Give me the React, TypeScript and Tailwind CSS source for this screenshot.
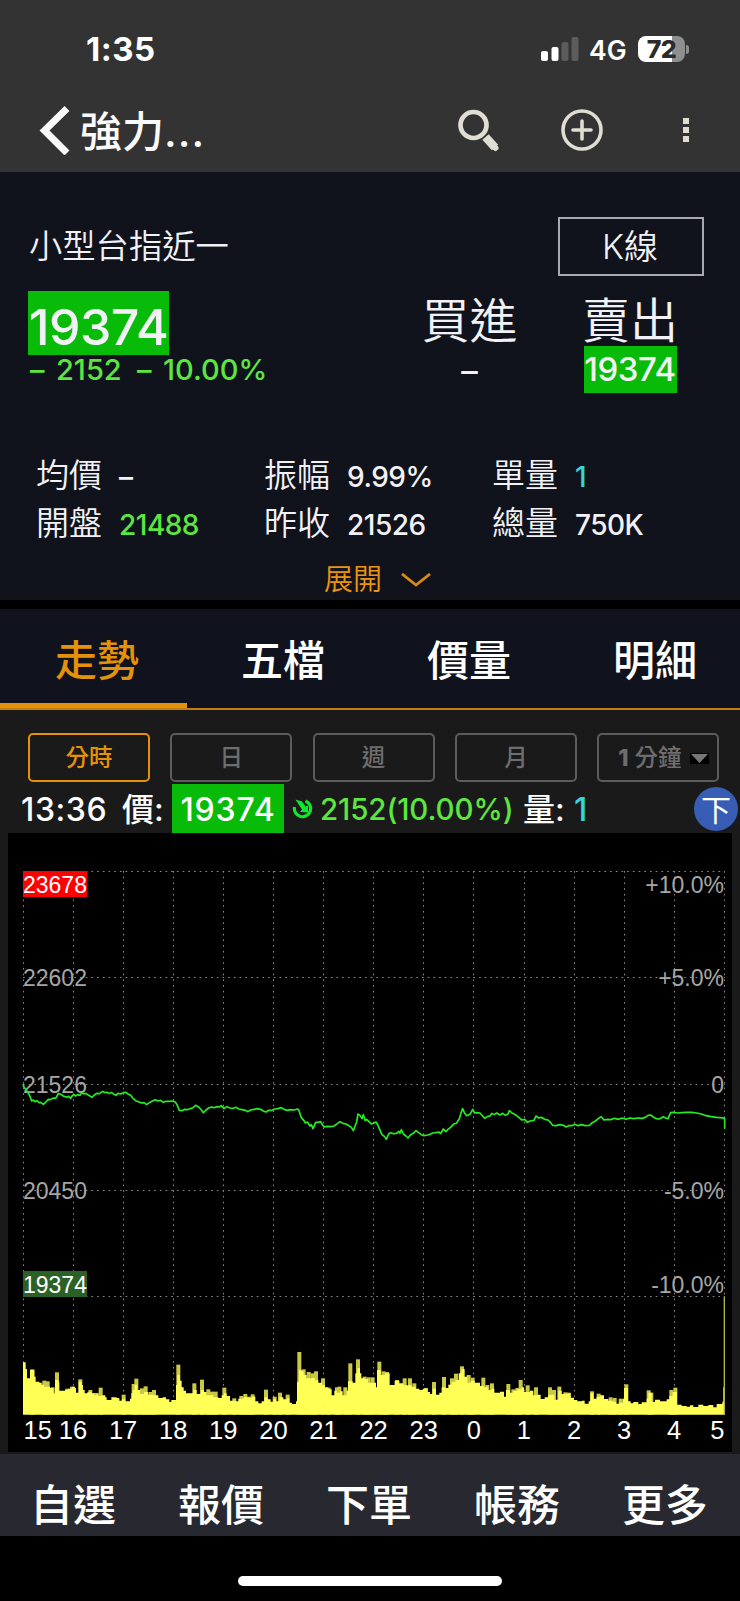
const stats = [
  { label: "均價", value: "–", color: "text-[#f2f2f6]" },
  { label: "振幅", value: "9.99%", color: "text-[#f2f2f6]" },
  { label: "單量", value: "1", color: "text-[#35d6d9]" },
  { label: "開盤", value: "21488", color: "text-[#5ce63f]" },
  { label: "昨收", value: "21526", color: "text-[#f2f2f6]" },
  { label: "總量", value: "750K", color: "text-[#f2f2f6]" },
];

const tabs = ["走勢", "五檔", "價量", "明細"];
const periods = ["分時", "日", "週", "月"];
const navItems = ["自選", "報價", "下單", "帳務", "更多"];

const priceLabels = [
  { y: 60, left: "23678", right: "+10.0%", limit: true },
  { y: 153, left: "22602", right: "+5.0%", limit: false },
  { y: 260, left: "21526", right: "0", limit: false },
  { y: 366, left: "20450", right: "-5.0%", limit: false },
  { y: 460, left: "19374", right: "-10.0%", limit: true },
];

const hours = ["16", "17", "18", "19", "20", "21", "22", "23", "0", "1", "2", "3", "4"];

// Chart series are stored in thirds of a pixel
const pricePoints =
  "69,732 72,742 80,752 88,764 95,783 100,780 105,785 110,782 117,788 122,787 130,793 138,786 145,778 152,779 160,774 167,775 175,761 183,763 190,768 200,772 206,769 212,775 218,766 222,764 226,768 233,764 240,766 246,758 252,762 258,760 266,766 276,772 283,765 290,760 298,761 308,754 314,758 322,757 328,761 334,757 342,763 348,766 354,760 362,762 370,758 378,757 384,762 392,766 400,776 408,783 416,785 424,789 432,788 440,794 448,788 456,784 466,779 474,783 482,781 490,787 498,784 508,784 518,783 526,786 532,796 538,811 546,812 554,808 562,809 570,806 578,804 587,796 596,801 604,810 610,818 618,810 626,804 634,801 642,803 650,800 658,801 664,797 672,806 680,800 690,804 700,805 708,802 716,807 726,809 736,811 744,815 752,810 762,808 772,806 782,808 790,813 798,816 806,811 816,811 824,807 834,806 844,803 852,808 862,811 872,809 882,810 892,807 896,809 904,833 912,842 916,849 922,846 930,858 934,854 939,866 947,847 955,847 962,845 968,856 973,861 982,859 992,860 1002,858 1012,851 1020,845 1028,850 1038,852 1048,858 1054,862 1060,872 1066,856 1070,846 1074,822 1080,826 1086,836 1090,824 1096,842 1100,838 1106,844 1114,852 1120,850 1128,846 1134,856 1138,866 1146,884 1154,890 1159,898 1166,882 1172,878 1180,881 1190,880 1196,874 1200,880 1204,869 1210,882 1218,888 1224,894 1232,884 1240,880 1248,872 1256,878 1264,884 1272,887 1282,885 1290,883 1298,879 1308,878 1316,876 1322,881 1330,867 1338,875 1344,868 1352,862 1360,853 1370,849 1378,836 1384,816 1388,806 1394,820 1400,827 1410,823 1416,812 1418,808 1424,819 1432,818 1440,819 1448,828 1454,835 1462,830 1470,828 1476,820 1482,824 1490,819 1500,825 1508,820 1516,826 1524,822 1528,812 1536,819 1546,824 1556,832 1566,840 1574,838 1582,847 1590,843 1602,841 1608,828 1616,834 1624,832 1634,838 1644,840 1652,848 1658,856 1668,857 1680,854 1690,856 1698,861 1706,857 1716,857 1724,853 1734,857 1744,854 1756,857 1768,856 1776,849 1786,843 1796,835 1804,830 1812,840 1822,838 1832,839 1844,835 1856,838 1866,834 1878,838 1890,834 1902,836 1914,834 1926,835 1936,832 1944,826 1952,825 1960,831 1968,836 1978,837 1990,830 1996,834 2004,836 2012,818 2022,817 2034,819 2046,818 2060,817 2075,817 2090,819 2104,822 2118,827 2134,830 2150,832 2162,833 2174,835 2174,866";

// [x, top] steps of the filled volume area
const volume = [
  [69, 607], [77, 627], [81, 655], [90, 630], [103, 650], [107, 665], [118, 668], [125, 674], [132, 680], [150, 684], [160, 700], [165, 660], [175, 665], [178, 692], [195, 690], [205, 686], [215, 680], [225, 684], [228, 698], [236, 665], [245, 675], [249, 690], [254, 700], [262, 697], [275, 700], [283, 706], [290, 700], [296, 708], [305, 706], [316, 712], [320, 720], [334, 712], [350, 714], [358, 722], [366, 718], [376, 724], [390, 716], [394, 700], [398, 690], [404, 674], [412, 690], [420, 702], [432, 696], [445, 704], [458, 706], [468, 706], [475, 714], [488, 712], [498, 718], [508, 726], [514, 720], [528, 675], [532, 645], [539, 662], [545, 682], [551, 692], [558, 700], [570, 700], [580, 690], [590, 702], [603, 690], [612, 696], [620, 706], [640, 712], [655, 714], [665, 706], [672, 700], [680, 708], [690, 722], [706, 724], [715, 716], [730, 712], [745, 714], [755, 710], [766, 724], [775, 730], [785, 724], [793, 712], [803, 718], [812, 725], [820, 718], [828, 724], [838, 712], [850, 718], [862, 714], [868, 728], [876, 732], [888, 724], [891, 665], [897, 630], [905, 634], [911, 645], [920, 655], [935, 654], [945, 660], [955, 668], [966, 676], [975, 682], [985, 688], [995, 706], [1003, 692], [1010, 698], [1020, 694], [1028, 706], [1040, 692], [1044, 664], [1058, 668], [1066, 640], [1072, 625], [1080, 640], [1084, 655], [1095, 657], [1104, 668], [1128, 682], [1131, 630], [1143, 645], [1155, 640], [1169, 675], [1184, 662], [1198, 670], [1210, 676], [1235, 680], [1247, 686], [1258, 690], [1268, 686], [1282, 696], [1290, 702], [1298, 686], [1308, 704], [1318, 698], [1325, 682], [1335, 684], [1345, 674], [1355, 666], [1366, 660], [1376, 640], [1384, 628], [1394, 650], [1402, 668], [1412, 662], [1424, 668], [1440, 678], [1452, 682], [1464, 690], [1475, 686], [1483, 698], [1500, 695], [1512, 710], [1518, 690], [1530, 698], [1540, 692], [1552, 688], [1565, 682], [1572, 696], [1590, 692], [1600, 706], [1612, 704], [1622, 717], [1634, 712], [1645, 705], [1655, 704], [1663, 719], [1675, 692], [1685, 702], [1706, 700], [1712, 713], [1722, 720], [1732, 724], [1746, 722], [1754, 731], [1766, 724], [1772, 700], [1780, 716], [1790, 710], [1800, 706], [1812, 717], [1825, 722], [1840, 726], [1848, 731], [1858, 728], [1868, 716], [1872, 684], [1884, 724], [1892, 730], [1900, 726], [1915, 732], [1925, 727], [1940, 716], [1945, 698], [1955, 726], [1965, 719], [1980, 724], [2000, 718], [2008, 708], [2018, 696], [2031, 734], [2045, 738], [2060, 740], [2070, 736], [2080, 741], [2095, 734], [2110, 738], [2125, 735], [2140, 742], [2150, 732], [2160, 732], [2167, 725], [2170, 682], [2175, 764],
];

// Short-lived peaks that rise over the area
const spikes = [
  [91, 628], [127, 662], [137, 664], [152, 682], [165, 637], [196, 686], [210, 680], [235, 658], [265, 690], [280, 699], [296, 683], [365, 704], [395, 672], [403, 656], [420, 685], [431, 679], [446, 696], [456, 690], [529, 614], [577, 670], [600, 659], [619, 688], [630, 695], [641, 695], [667, 683], [697, 715], [718, 708], [730, 702], [742, 710], [752, 703], [792, 689], [818, 710], [834, 698], [857, 704], [892, 576], [905, 628], [920, 636], [931, 640], [942, 634], [963, 655], [980, 683], [1005, 682], [1012, 680], [1030, 682], [1045, 610], [1068, 598], [1088, 650], [1100, 652], [1112, 652], [1132, 605], [1145, 634], [1155, 636], [1185, 660], [1208, 655], [1224, 655], [1237, 670], [1272, 684], [1296, 666], [1326, 651], [1350, 655], [1362, 641], [1380, 619], [1400, 645], [1412, 653], [1444, 653], [1456, 675], [1470, 670], [1519, 672], [1534, 688], [1556, 660], [1546, 684], [1577, 676], [1602, 682], [1644, 682], [1656, 690], [1672, 680], [1690, 697], [1700, 698], [1770, 694], [1790, 701], [1826, 712], [1838, 714], [1856, 716], [1873, 673], [1940, 691], [1948, 698], [2008, 690], [2020, 683],
];

const volumePath =
  "M69 764" + volume.map(([x, y]) => `H${x}V${y}`).join("") + "Z";

function StatusBar() {
  return (
    <div className="flex h-[87px] items-center pt-[11px] pl-[86px] text-white">
      <span className="w-[455px] pt-px text-[33px] leading-none font-bold tracking-[0.500px]">1:35</span>
      <svg className="h-6 w-[38px]" viewBox="0 0 38 24">
        <rect x="0" y="14" width="7" height="10" rx="2" fill="#fff" />
        <rect x="10.5" y="10" width="7" height="14" rx="2" fill="#fff" />
        <rect x="20.5" y="5" width="7" height="19" rx="2" fill="#5c5c5c" />
        <rect x="30.5" y="0" width="7" height="24" rx="2" fill="#5c5c5c" />
      </svg>
      <span className="ml-[10px] w-[49px] pt-[2px] text-[26.500px] leading-none font-semibold">4G</span>
      <div className="flex h-[26px] w-[47px] items-center justify-center rounded-[8px] bg-linear-to-r from-white from-72% to-[#8f8f8f] to-72% text-[25px] leading-none font-extrabold tracking-[-0.500px] text-[#2b2b2b]">
        72
      </div>
      <div className="ml-[1px] h-[9px] w-[3px] rounded-r-full bg-[#8f8f8f]" />
    </div>
  );
}

function Header() {
  return (
    <header className="h-[172px] bg-[#333333]">
      <StatusBar />
      <div className="flex h-[85px] items-center">
        <svg className="ml-[38px] h-[50px] w-[34px]" viewBox="0 0 34 50" fill="none" stroke="#fafafa" strokeWidth="7">
          <path d="M29 3.500L6.500 25.500L29 48" />
        </svg>
        <h1 className="ml-[8px] w-[377px] pt-[5px] text-[42px] leading-none font-medium whitespace-nowrap text-[#fafafa]">
          強力<span className="tracking-[1px]">...</span>
        </h1>
        <svg className="h-[44px] w-[44px]" viewBox="0 0 44 44" fill="none" stroke="#e0ddd2">
          <circle cx="16.500" cy="17" r="13" strokeWidth="4.700" />
          <path d="M28.500 29L38 39.500" strokeWidth="8.500" />
          <path d="M34 35.500L38.500 40" strokeWidth="6" strokeLinecap="round" />
        </svg>
        <svg className="ml-[60px] h-[42px] w-[42px]" viewBox="0 0 42 42" fill="none" stroke="#e0ddd2" strokeWidth="3.600">
          <circle cx="21" cy="21" r="19" />
          <path d="M21 12V30M12 21H30" strokeLinecap="round" />
        </svg>
        <div className="ml-[80px] flex flex-col gap-[3px]">
          <i className="size-[6px] bg-[#e0ddd2]" />
          <i className="size-[6px] bg-[#e0ddd2]" />
          <i className="size-[6px] bg-[#e0ddd2]" />
        </div>
      </div>
    </header>
  );
}

function QuotePanel() {
  return (
    <section className="h-[428px] bg-[#11131c] pt-[45px] text-[#f2f2f6]">
      <div className="flex h-[59px] items-center justify-between pr-[36px] pl-[29px]">
        <h2 className="pt-px text-[33.300px] leading-none font-[350]">小型台指近一</h2>
        <button className="h-[59px] w-[146px] border-2 border-[#a9aab0] pr-[2px] text-[34px] leading-none font-[350]">
          K線
        </button>
      </div>

      <div className="mt-[15px] flex pr-[30px] pl-[28px]">
        <div className="flex-1">
          <div className="flex h-[64px] w-[141px] items-center justify-center bg-[#08bb08] pt-[8px] text-[50px] leading-none font-medium tracking-[-0.500px]">
            19374
          </div>
          <p className="flex h-[29px] items-center pl-[2px] text-[29px] leading-none font-medium whitespace-nowrap text-[#5ce63f]">
            <span className="w-[26px]">–</span>
            <span className="w-[81px]">2152</span>
            <span className="w-[26px]">–</span>
            <span>10.00%</span>
          </p>
        </div>
        <div className="flex w-[161px] flex-col items-center">
          <div className="flex h-[55px] items-center pt-[5px] text-[48px] leading-none font-[350]">買進</div>
          <div className="flex h-[47px] items-center pt-[3px] text-[33px] leading-none font-medium">–</div>
        </div>
        <div className="flex w-[160px] flex-col items-center">
          <div className="flex h-[55px] items-center pt-[5px] text-[48px] leading-none font-[350]">賣出</div>
          <div className="flex h-[47px] w-[93px] items-center justify-center bg-[#08bb08] text-[33px] leading-none font-medium tracking-[-0.500px]">
            19374
          </div>
        </div>
      </div>

      <div className="mt-[58px] grid grid-cols-[228px_228px_228px] pl-[36px]">
        {stats.map((s) => (
          <div key={s.label} className="flex h-[48px] items-center">
            <span className="w-[83px] pt-px text-[33px] leading-none font-[350]">{s.label}</span>
            <span className={`pt-[4px] text-[28px] leading-none font-medium tracking-[-0.500px] ${s.color}`}>{s.value}</span>
          </div>
        ))}
      </div>

      <button className="flex w-full items-center gap-[19px] pt-[18px] pl-[324px] text-[29px] leading-none font-[350] text-[#ec940c]">
        展開
        <svg className="h-[14px] w-[30px]" viewBox="0 0 30 14" fill="none" stroke="#d98c14" strokeWidth="2.800">
          <path d="M1 1L15 12L29 1" />
        </svg>
      </button>
    </section>
  );
}

function Tabs() {
  return (
    <nav className="mt-[9px] flex h-[101px] overflow-hidden border-b-2 border-[#c27f10] bg-[#10131d]">
      {tabs.map((tab, i) => (
        <button
          key={tab}
          className={
            i === 0
              ? "h-[99px] w-[187px] shrink-0 border-b-[5px] border-[#e3920a] pt-[9px] pl-[7px] text-[42px] leading-none font-medium text-[#e3920a]"
              : "h-[99px] w-[186px] shrink-0 pt-[4px] pl-[6px] text-[42px] leading-none font-medium text-white"
          }
        >
          {tab}
        </button>
      ))}
    </nav>
  );
}

function Periods() {
  return (
    <div className="flex gap-[20.300px] pt-[23px] pl-[28px]">
      {periods.map((p, i) => (
        <button
          key={p}
          className={
            i === 0
              ? "h-[49px] w-[122px] rounded-[5px] border-2 border-[#e3920a] pt-px text-[23.500px] leading-none font-medium text-[#e3920a]"
              : "h-[49px] w-[122px] rounded-[5px] border-2 border-[#5c5c5c] pt-px text-[23.500px] leading-none font-medium text-[#6e6e6e]"
          }
        >
          {p}
        </button>
      ))}
      <button className="flex h-[49px] w-[122px] items-center rounded-[5px] border-2 border-[#5c5c5c] pt-px pl-[19px] text-[23.500px] leading-none font-medium whitespace-nowrap text-[#6e6e6e]">
        <b className="mr-[6px] font-extrabold">1</b>分鐘
        <span className="ml-[8px] flex h-[11px] w-[19px] items-center justify-center bg-black">
          <svg className="h-[9px] w-[17px]" viewBox="0 0 17 9" fill="#777">
            <path d="M0 0H17L8.500 9Z" />
          </svg>
        </span>
      </button>
    </div>
  );
}

function Ticker() {
  return (
    <div className="mt-[2px] flex h-[49px] items-center pl-[21px] text-[32px] leading-none font-medium whitespace-nowrap text-white">
      <span className="w-[101px] pt-[2px] tracking-[0.600px]">13:36</span>
      <span className="w-[50px] pt-[2px]">價:</span>
      <span className="flex h-[49px] w-[112px] items-center justify-center bg-[#08bb08] pt-[2px] tracking-[0.800px]">19374</span>
      <svg className="ml-[8px] h-[21px] w-[21px]" viewBox="0 0 21 21">
        <path d="M13.500 2.900A8.200 8.200 0 1 1 2.400 9" fill="none" stroke="#0bea2b" strokeWidth="3.200" />
        <path d="M3.500 1.500L10 3.500L13.500 8.500L16 7.500V14.500L8 14L10 11.500L7 7Z" fill="#0bea2b" />
      </svg>
      <span className="ml-[7px] w-[203px] pt-[2px] text-[29.500px] font-medium tracking-[-0.100px] text-[#5ce63f]">2152(10.00%)</span>
      <span className="w-[51px] pt-[2px]">量:</span>
      <span className="flex-1 pt-[2px] text-[#35d6d9]">1</span>
      <span className="mr-[2px] flex size-[44px] items-center justify-center rounded-full bg-[#385db5] pt-[2px] text-[30px] font-normal">下</span>
    </div>
  );
}

function Chart() {
  return (
    <svg className="mx-auto block h-[619px] w-[724px] bg-black" viewBox="0 0 724 619" fontFamily="'Liberation Sans', Arial, sans-serif">
      <g stroke="#858585" strokeWidth="1" strokeDasharray="1.700 4">
        {[38.5, 144.5, 251.5, 357.5, 463.5].map((y) => (
          <line key={y} x1="15" x2="717" y1={y} y2={y} />
        ))}
        {Array.from({ length: 15 }, (_, i) => Math.floor(15 + i * 50.1) + 0.5).map((x) => (
          <line key={x} x1={x} x2={x} y1="38" y2="581" />
        ))}
      </g>

      <rect x="15" y="38" width="64" height="26" fill="#ff0000" />
      <rect x="15" y="438" width="64" height="26" fill="#2b6126" />
      <g fontSize="23" fill="#a6a6a6">
        {priceLabels.map((l) => (
          <g key={l.left}>
            <text x="15" y={l.y} fill={l.limit ? "#fff" : "#a6a6a6"}>
              {l.left}
            </text>
            <text x="716" y={l.y} textAnchor="end">
              {l.right}
            </text>
          </g>
        ))}
      </g>

      <g transform="translate(-8 7) scale(0.33333)">
        <polyline points={pricePoints} fill="none" stroke="#25ee20" strokeWidth="5" strokeLinejoin="round" />
      </g>
      <g transform="translate(-8 327) scale(0.33333)">
        {spikes.map(([x, y]) => (
          <rect key={x} x={x} y={y} width="12" height={764 - y} fill="#cbc944" />
        ))}
        <path d={volumePath} fill="#ffff55" />
        <rect x="2171" y="410" width="4" height="354" fill="#b5b44c" />
      </g>

      <g fill="#fff" fontSize="25.500">
        <text x="15.500" y="606">15</text>
        {hours.map((h, i) => (
          <text key={h} x={65 + i * 50.1} y="606" textAnchor="middle">
            {h}
          </text>
        ))}
        <text x="716.500" y="606" textAnchor="end">5</text>
      </g>
    </svg>
  );
}

export default function App() {
  return (
    <div className="flex h-[1601px] w-[740px] flex-col overflow-hidden bg-black font-['Inter','Noto_Sans_CJK_TC',sans-serif]">
      <Header />
      <QuotePanel />
      <Tabs />
      <main className="h-[744px] bg-[#1a1a1a]">
        <Periods />
        <Ticker />
        <Chart />
      </main>
      <nav className="flex h-[82px] bg-[#282830] text-[43px] leading-none font-medium text-white">
        {navItems.map((item) => (
          <button key={item} className="h-[82px] w-[148px] pt-[21px] pr-[2px] leading-none">
            {item}
          </button>
        ))}
      </nav>
      <div className="mx-auto mt-[40px] h-[10px] w-[264px] rounded-full bg-white" />
    </div>
  );
}
